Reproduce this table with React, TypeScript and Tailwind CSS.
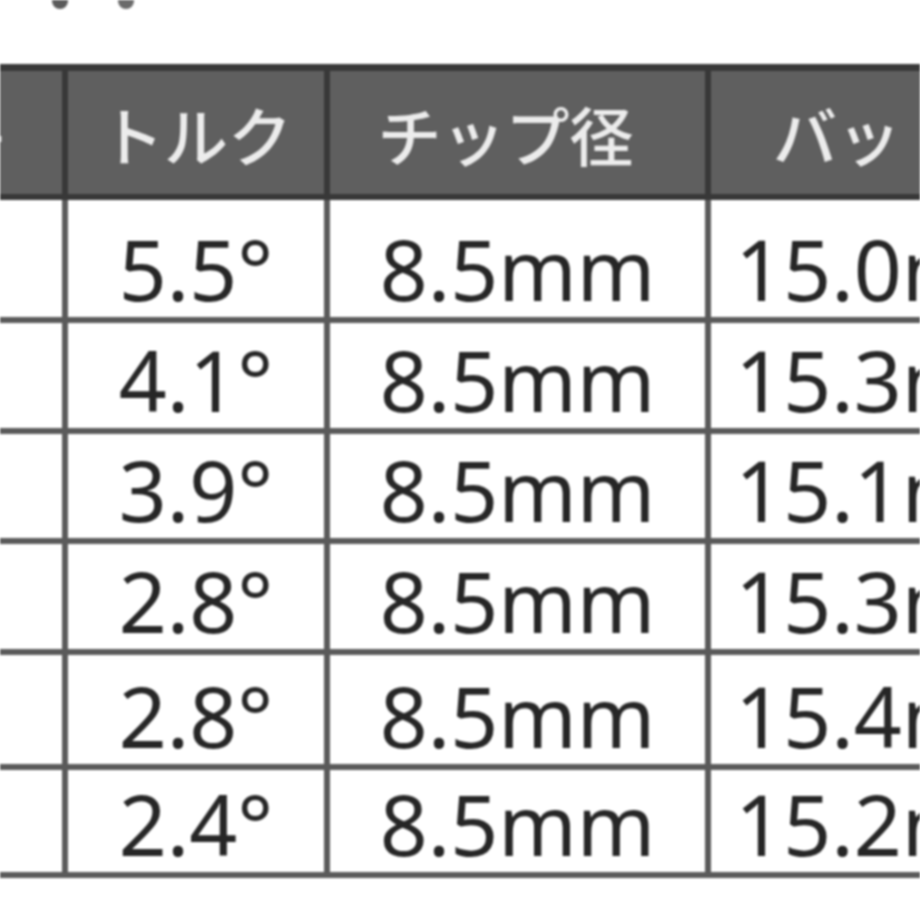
import React from 'react';

type Row = {
  torque: string;
  tip: string;
  butt: string;
  height: string;
};

const rows: Row[] = [
  { torque: '5.5°', tip: '8.5mm', butt: '15.0mm', height: 'h-[123px]' },
  { torque: '4.1°', tip: '8.5mm', butt: '15.3mm', height: 'h-[111px]' },
  { torque: '3.9°', tip: '8.5mm', butt: '15.1mm', height: 'h-[110px]' },
  { torque: '2.8°', tip: '8.5mm', butt: '15.3mm', height: 'h-[111px]' },
  { torque: '2.8°', tip: '8.5mm', butt: '15.4mm', height: 'h-[115px]' },
  { torque: '2.4°', tip: '8.5mm', butt: '15.2mm', height: 'h-[108px]' },
];

const App: React.FC = () => {
  return (
    <div className="w-[920px] h-[920px] overflow-hidden bg-white blur-[1.1px]">
      {/* bottom of the line above the table */}
      <div className="h-[64px] flex items-start">
        <span className="ml-[52px] w-[16px] h-[9px] rounded-b-full bg-[#5a5a5a]" />
        <span className="ml-[50px] w-[16px] h-[9px] rounded-b-full bg-[#6a6a6a]" />
      </div>

      <div className="ml-[-184px] w-[1300px] font-['Noto_Sans','Noto_Sans_CJK_JP',sans-serif]">
        {/* header */}
        <div className="flex h-[136px] bg-[#5f5f5f] border-t-[7px] border-b-[6px] border-[#383838] text-[#ececec] text-[64px] leading-none font-['Noto_Sans_CJK_JP',sans-serif] font-medium">
          <div className="w-[252px] flex items-center justify-end pr-[58px] border-r-[6px] border-[#383838]">
            調子
          </div>
          <div className="w-[262px] flex items-center justify-center border-r-[6px] border-[#383838]">
            トルク
          </div>
          <div className="w-[381px] flex items-center justify-center pr-[24px] border-r-[6px] border-[#383838]">
            チップ径
          </div>
          <div className="w-[372px] flex items-center justify-center pl-[8px]">
            バット径
          </div>
        </div>

        {/* body */}
        {rows.map((row, i) => (
          <div
            key={i}
            className={`flex ${row.height} border-b-[6px] border-[#5a5a5a] text-[#262626] text-[84px] leading-none`}
          >
            <div className="w-[252px] border-r-[6px] border-[#5a5a5a]" />
            <div className="w-[262px] flex items-end justify-center pb-[6px] border-r-[6px] border-[#5a5a5a]">
              {row.torque}
            </div>
            <div className="w-[381px] flex items-end justify-center pb-[6px] border-r-[6px] border-[#5a5a5a]">
              {row.tip}
            </div>
            <div className="w-[372px] flex items-end justify-center pb-[6px]">
              {row.butt}
            </div>
          </div>
        ))}
      </div>
    </div>
  );
};

export default App;
